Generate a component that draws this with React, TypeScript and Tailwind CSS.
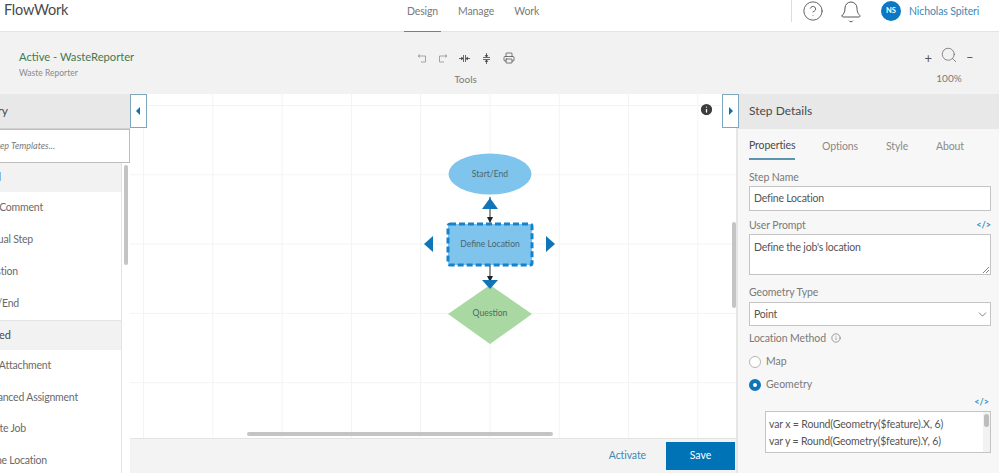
import { Bell, ChevronDown, CircleHelp, Info, Printer, Search } from "lucide-react";

const font = { fontFamily: "Lato, 'Noto Sans', sans-serif" };

// the left panel is scrolled past the window edge, so rows are anchored by where their text ends
function ListRow({ label, inset }: { label: string; inset: string }) {
  return (
    <div className={`flex items-center justify-end whitespace-nowrap text-[10.5px] tracking-[-0.2px] text-[#6a6a6a] ${inset}`}>
      {label}
    </div>
  );
}

function LeftPanel() {
  return (
    <aside className="relative h-full w-[130px] shrink-0 overflow-hidden bg-white">
      <div className="flex h-[35px] items-center justify-end whitespace-nowrap border-b border-[#d0d0d0] bg-[#e8e8e8] pr-[122px] text-[12px] text-[#4a4a4a]">
        Step Library
      </div>
      <div className="flex h-[34px] items-center justify-end whitespace-nowrap border border-l-0 border-[#bdbdbd] bg-white pr-[74px] text-[9px] italic text-[#7a7a7a]">
        Search Step Templates...
      </div>
      <div className="w-[122px] border-r border-[#e4e4e4]">
        <div className="flex h-[29px] items-center justify-end whitespace-nowrap bg-[#f2f2f2] pr-[120px] text-[11px] text-[#4a4a4a]">
          General
        </div>
        <ListRow label="Add Comment" inset="h-[32px] pr-[78px]" />
        <ListRow label="Manual Step" inset="h-[32px] pr-[88px]" />
        <ListRow label="Question" inset="h-[32px] pr-[103px]" />
        <ListRow label="Start/End" inset="h-[32px] pr-[102px]" />
        <div className="flex h-[30px] items-center justify-end whitespace-nowrap border-t border-[#e4e4e4] bg-[#f2f2f2] pr-[110px] text-[11px] text-[#4a4a4a]">
          Advanced
        </div>
        <ListRow label="Add Attachment" inset="h-[31.7px] pr-[70px]" />
        <ListRow label="Advanced Assignment" inset="h-[31.7px] pr-[43px]" />
        <ListRow label="Create Job" inset="h-[31.7px] pr-[95px]" />
        <ListRow label="Define Location" inset="h-[31.7px] pr-[74px]" />
      </div>
      <div className="absolute left-[124px] top-[71px] h-[100px] w-[4px] rounded-sm bg-[#c4c4c4]" />
    </aside>
  );
}

function FlowDiagram() {
  return (
    <svg className="absolute left-0 top-0" width="605" height="344" viewBox="130 94 605 344">
      <defs>
        <marker id="tip" markerWidth="6" markerHeight="6" refX="5" refY="3" orient="auto">
          <path d="M0 0 L6 3 L0 6 Z" fill="#222" />
        </marker>
      </defs>
      <ellipse cx="490" cy="174" rx="41.5" ry="20.5" fill="#7fc4ec" />
      <rect x="448" y="224" width="84" height="41" rx="2" fill="#7fc4ec" stroke="#1283cc" strokeWidth="3" strokeDasharray="6 3" />
      <path d="M490 285 L532 314 L490 344 L448 314 Z" fill="#a9d8a2" />
      <path d="M490 197 V222" stroke="#333" strokeWidth="1" markerEnd="url(#tip)" />
      <path d="M490 266 V281" stroke="#333" strokeWidth="1" markerEnd="url(#tip)" />
      <path d="M490 198 L498 209 L482 209 Z" fill="#0f74b8" />
      <path d="M482 280 L498 280 L490 289 Z" fill="#0f74b8" />
      <path d="M433 236 L433 252 L424 244 Z" fill="#0f74b8" />
      <path d="M546 236 L546 252 L555 244 Z" fill="#0f74b8" />
      <g fontFamily="Lato, sans-serif" fontSize="8.6" textAnchor="middle" fill="#4d6470">
        <text x="490" y="177">Start/End</text>
        <text x="490" y="247">Define Location</text>
        <text x="490" y="316" fill="#55685a">Question</text>
      </g>
    </svg>
  );
}

function Canvas() {
  return (
    <main className="relative flex h-full min-w-0 flex-1 flex-col">
      <div className="relative flex-1 bg-white bg-[linear-gradient(to_right,#f3f3f3_1px,transparent_1px),linear-gradient(to_bottom,#f3f3f3_1px,transparent_1px)] bg-[size:69.3px_69.3px] bg-[position:13px_11px]">
        <FlowDiagram />
        <Info className="absolute left-[569px] top-[8px] h-[15px] w-[15px] fill-[#3c3c3c] text-white" strokeWidth={2} />
        <div className="absolute left-[117px] top-[338px] h-[4px] w-[306px] rounded-sm bg-[#c4c4c4]" />
        <div className="absolute left-[602px] top-[128px] h-[86px] w-[4px] rounded-sm bg-[#c4c4c4]" />
      </div>
      <div className="flex h-[35px] items-center justify-end border-t border-[#e4e4e4] bg-[#f3f3f3]">
        <button className="mr-[20px] text-[10.5px] tracking-[-0.1px] text-[#3f87b5]">Activate</button>
        <button className="mr-[1px] h-[28px] w-[69px] bg-[#0073b7] text-[10.5px] text-white">Save</button>
      </div>
      <CollapseTab side="left" />
      <CollapseTab side="right" />
    </main>
  );
}

function CollapseTab({ side }: { side: "left" | "right" }) {
  return (
    <div
      className={
        side === "left"
          ? "absolute left-0 top-0 flex h-[34px] w-[17px] items-center justify-center border border-[#7fa6bb] bg-white"
          : "absolute left-[592px] top-0 flex h-[34px] w-[17px] items-center justify-center border border-[#7fa6bb] bg-white"
      }
    >
      <svg width="5" height="8" viewBox="0 0 5 8">
        <path d={side === "left" ? "M4 0 V8 L0 4 Z" : "M1 0 V8 L5 4 Z"} fill="#0f6fa8" />
      </svg>
    </div>
  );
}

function FieldLabel({ children }: { children: React.ReactNode }) {
  return <div className="text-[10.5px] leading-[14px] tracking-[-0.1px] text-[#7a7a7a]">{children}</div>;
}

function CodeLink() {
  return <span className="text-[9px] font-bold leading-[14px] text-[#2f8fc8]">&lt;/&gt;</span>;
}

function RightPanel() {
  return (
    <aside className="h-full w-[263px] shrink-0 overflow-hidden border-l-2 border-[#e6e6e6] bg-[#f7f7f7]">
      <div className="flex h-[35px] items-center bg-[#e8e8e8] pb-[1px] pl-[11px] text-[12px] text-[#4a4a4a]">Step Details</div>
      <div className="pl-[11px] pr-[8px]">
        <div className="flex h-[31px] items-end text-[10.5px] tracking-[-0.1px] text-[#8a8a8a]">
          <div className="flex h-[31px] w-[46px] items-center border-b-2 border-[#5c93ad] pt-[4px] text-[#4a4a4a]">Properties</div>
          <div className="ml-[27px] flex h-[31px] w-[36px] items-center pt-[4px]">Options</div>
          <div className="ml-[28px] flex h-[31px] w-[22px] items-center pt-[4px]">Style</div>
          <div className="ml-[28px] flex h-[31px] items-center pt-[4px]">About</div>
        </div>
        <div className="mt-[10px]">
          <FieldLabel>Step Name</FieldLabel>
        </div>
        <div className="mt-[2px] flex h-[25px] items-center border border-[#c4c4c4] bg-white px-[4px] pt-[1px] text-[10.5px] tracking-[-0.2px] text-[#555]">Define Location</div>
        <div className="mt-[7px] flex items-center justify-between">
          <FieldLabel>User Prompt</FieldLabel>
          <CodeLink />
        </div>
        <div className="relative mt-[2px] h-[41px] border border-[#c4c4c4] bg-white px-[4px] pt-[4px] text-[10.5px] leading-[16px] tracking-[-0.2px] text-[#555]">
          Define the job's location
          <svg className="absolute bottom-[1px] right-[1px]" width="6" height="6" viewBox="0 0 6 6">
            <path d="M0 6 L6 0 M3 6 L6 3" stroke="#666" strokeWidth="0.8" />
          </svg>
        </div>
        <div className="mt-[10px]">
          <FieldLabel>Geometry Type</FieldLabel>
        </div>
        <div className="mt-[3px] flex h-[24px] items-center justify-between border border-[#c4c4c4] bg-white pl-[4px] pr-[1px] text-[10.5px] tracking-[-0.2px] text-[#555]">
          <span className="pt-[1px]">Point</span>
          <ChevronDown className="h-[13px] w-[13px] text-[#666]" strokeWidth={1.5} />
        </div>
        <div className="mt-[5px] flex items-center gap-[5px]">
          <FieldLabel>Location Method</FieldLabel>
          <Info className="h-[10px] w-[10px] text-[#666]" strokeWidth={1.5} />
        </div>
        <div className="mt-[10px] flex h-[14px] items-center gap-[5px] text-[10.5px] text-[#7a7a7a]">
          <span className="h-[12px] w-[12px] rounded-full border border-[#b5b5b5] bg-white" />
          Map
        </div>
        <div className="mt-[9px] flex h-[14px] items-center gap-[5px] text-[10.5px] text-[#7a7a7a]">
          <span className="h-[12px] w-[12px] rounded-full border-[4px] border-[#0f74b8] bg-white" />
          Geometry
        </div>
        <div className="mt-[3px] flex justify-end pr-[2px]">
          <CodeLink />
        </div>
        <div className="relative ml-[16px] mt-[2px] h-[42px] overflow-hidden border border-[#c4c4c4] bg-white pl-[3px] pt-[4px] text-[10.5px] leading-[17px] tracking-[-0.15px] text-[#555]">
          <div>var x = Round(Geometry($feature).X, 6)</div>
          <div>var y = Round(Geometry($feature).Y, 6)</div>
          <div className="absolute right-0 top-0 h-full w-[7px] bg-[#f2f2f2]">
            <div className="mx-auto mt-[2px] h-[13px] w-[5px] rounded-sm bg-[#bdbdbd]" />
          </div>
        </div>
      </div>
    </aside>
  );
}

function UndoIcon({ flip }: { flip?: boolean }) {
  return (
    <svg width="10" height="9" viewBox="0 0 10 9" className={flip ? "-scale-x-100" : ""} fill="none" stroke="#9a9a9a" strokeWidth="0.9">
      <path d="M1.5 2 H8.5 V8 H4" />
      <path d="M3 0.5 L1 2 L3 3.5" />
    </svg>
  );
}

function AlignIcon({ vertical }: { vertical?: boolean }) {
  return (
    <svg width="11" height="11" viewBox="0 0 11 11" className={vertical ? "rotate-90" : ""} fill="#444" stroke="#444" strokeWidth="0.8">
      <path d="M0 5.5 H4 M7 5.5 H11 M4.5 2 V9 M6.5 2 V9" fill="none" />
      <path d="M4 5.5 L2.5 4.3 V6.7 Z M7 5.5 L8.5 4.3 V6.7 Z" />
    </svg>
  );
}

export default function App() {
  return (
    <div className="flex h-[473px] w-[999px] flex-col overflow-hidden bg-white" style={font}>
      <header className="flex h-[32px] shrink-0 border-b border-[#e4e4e4] bg-white">
        <div className="w-[404px] pl-[4px] text-[14.5px] leading-[20px] tracking-[-0.2px] text-[#4a4a4a]">FlowWork</div>
        <nav className="flex h-[32px] w-[387px] text-[10.5px] tracking-[-0.1px] text-[#7a7a7a]">
          <div className="w-[37px] border-b border-[#4f8ea8] pt-[4px] text-center">Design</div>
          <div className="ml-[17px] pt-[4px]">Manage</div>
          <div className="ml-[20px] pt-[4px]">Work</div>
        </nav>
        <div className="h-[22px] w-px bg-[#dcdcdc]" />
        <CircleHelp className="ml-[10px] h-[22px] w-[22px] text-[#444]" strokeWidth={0.9} />
        <Bell className="ml-[15px] h-[24px] w-[24px] text-[#444]" strokeWidth={0.9} />
        <div className="ml-[18px] mt-[1px] flex h-[20px] w-[20px] items-center justify-center rounded-full bg-[#0a78c2] text-[7.5px] font-bold text-white">NS</div>
        <div className="ml-[8px] pt-[4px] text-[10.5px] tracking-[-0.1px] text-[#3f87b5]">Nicholas Spiteri</div>
      </header>

      <section className="flex h-[62px] shrink-0 bg-[#f2f2f2]">
        <div className="ml-[19px] w-[394px] pt-[18px]">
          <div className="text-[11.2px] leading-[14px] text-[#3f7a50]">Active - WasteReporter</div>
          <div className="mt-[4px] text-[8.5px] leading-[11px] text-[#8a8a8a]">Waste Reporter</div>
        </div>
        <div className="flex w-[105px] flex-col items-center pt-[20px]">
          <div className="flex h-[12px] items-center gap-[11px]">
            <UndoIcon />
            <UndoIcon flip />
            <AlignIcon />
            <AlignIcon vertical />
            <Printer className="h-[12px] w-[12px] text-[#444]" strokeWidth={1.4} />
          </div>
          <div className="mt-[8px] text-[10px] leading-[14px] text-[#7a7a7a]">Tools</div>
        </div>
        <div className="ml-[401px] flex w-[60px] flex-col items-center pt-[13px]">
          <div className="flex h-[19px] items-end gap-[8px] text-[#555]">
            <span className="text-[13px] leading-[12px]">+</span>
            <Search className="h-[18px] w-[18px] text-[#666]" strokeWidth={1} />
            <span className="text-[13px] leading-[14px]">–</span>
          </div>
          <div className="mt-[7px] text-[10px] leading-[14px] text-[#7a7a7a]">100%</div>
        </div>
      </section>

      <div className="flex min-h-0 flex-1">
        <LeftPanel />
        <Canvas />
        <RightPanel />
      </div>
    </div>
  );
}
